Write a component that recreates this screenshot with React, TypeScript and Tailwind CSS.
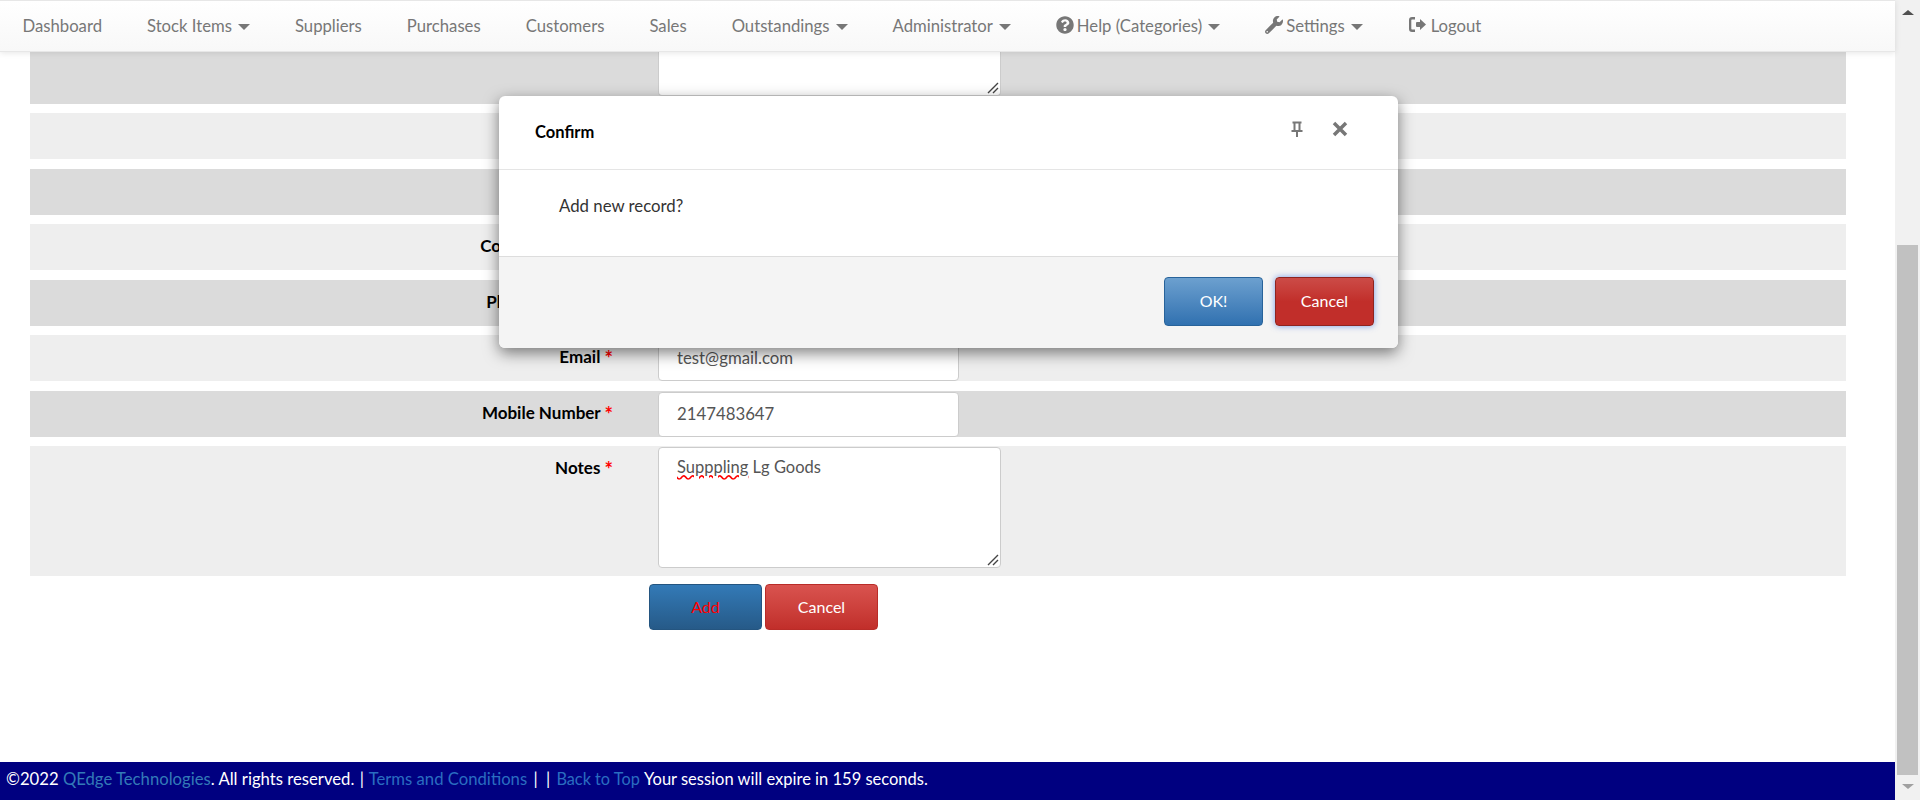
import { FaQuestionCircle, FaWrench } from 'react-icons/fa'

const font = "[font-family:Lato,'Liberation_Sans',sans-serif]"

function Caret() {
  return <span className="ml-[6px] inline-block border-x-[6px] border-t-[6px] border-x-transparent border-t-[#777] align-middle" />
}

function ResizeGrip() {
  return (
    <svg className="absolute bottom-[1px] right-[1px]" width="12" height="12" viewBox="0 0 12 12">
      <path d="M1 11 L11 1 M6 11 L11 6" stroke="#444" strokeWidth="1.4" fill="none" />
    </svg>
  )
}

function LogoutIcon() {
  return (
    <svg width="20" height="18" viewBox="0 0 20 18" fill="#777">
      <path d="M7 1h-3a3 3 0 0 0-3 3v9a3 3 0 0 0 3 3h3v-2.5h-3a.7.7 0 0 1-.7-.7v-8.600a.7.7 0 0 1 .7-.7h3z" />
      <path d="M9 6h3v-3l6 5.500-6 5.500v-3h-3a1 1 0 0 1-1-1v-3a1 1 0 0 1 1-1z" />
    </svg>
  )
}

function NavItem({ label, caret, icon }: { label: string; caret?: boolean; icon?: React.ReactNode }) {
  return (
    <a className="flex items-center px-[22.5px] pt-[2px] text-[16.7px] text-[#777] whitespace-nowrap">
      {icon && <span className="mr-[3px] flex items-center -translate-y-[2px]">{icon}</span>}
      {label}
      {caret && <Caret />}
    </a>
  )
}

function Label({ text }: { text: string }) {
  return (
    <div className="w-[598px] shrink-0 pt-[9px] pr-[15px] text-right text-[17px] font-bold text-black">
      {text} <span className="align-[-3px] text-[20px] leading-[20px] text-[#f00]">*</span>
    </div>
  )
}

function FieldRow({ label, value, dark }: { label: string; value: string; dark?: boolean }) {
  return (
    <div className={`flex h-[46px] shrink-0 ${dark ? 'bg-[#dbdbdb]' : 'bg-[#eeeeee]'}`}>
      <Label text={label} />
      <input
        readOnly
        value={value}
        className="ml-[30px] mt-[1px] h-[45px] w-[301px] rounded-[4px] border border-[#ccc] bg-white px-[18px] pb-[2px] text-[16.8px] text-[#555] outline-none"
      />
    </div>
  )
}

export default function App() {
  return (
    <div className={`flex h-[800px] w-[1920px] overflow-hidden bg-white ${font}`}>
      <div className="relative flex w-[1895px] flex-col">
        <nav className="relative z-10 flex h-[52px] shrink-0 border-y border-[#e7e7e7] bg-gradient-to-b from-white to-[#f8f8f8] shadow-[0_1px_6px_rgba(0,0,0,0.1)]">
          <NavItem label="Dashboard" />
          <NavItem label="Stock Items" caret />
          <NavItem label="Suppliers" />
          <NavItem label="Purchases" />
          <NavItem label="Customers" />
          <NavItem label="Sales" />
          <NavItem label="Outstandings" caret />
          <NavItem label="Administrator" caret />
          <NavItem label="Help (Categories)" caret icon={<FaQuestionCircle size={18} />} />
          <NavItem label="Settings" caret icon={<FaWrench size={18} />} />
          <NavItem label="Logout" icon={<LogoutIcon />} />
        </nav>

        <main className="flex flex-1 flex-col gap-[9.5px] overflow-hidden pl-[30px] pr-[49px]">
          <div className="flex h-[51.5px] shrink-0 bg-[#dbdbdb]">
            <div className="relative ml-[628px] h-[44px] w-[343px] rounded-b-[4px] border-x border-b border-[#ccc] bg-white">
              <ResizeGrip />
            </div>
          </div>
          <FieldRow label="Name" value="" />
          <FieldRow label="Address" value="" dark />
          <FieldRow label="Company Name" value="" />
          <FieldRow label="Phone Number" value="" dark />
          <FieldRow label="Email" value="test@gmail.com" />
          <FieldRow label="Mobile Number" value="2147483647" dark />
          <div className="flex h-[130px] shrink-0 bg-[#eeeeee]">
            <Label text="Notes" />
            <div className="relative ml-[30px] mt-[1px] h-[121px] w-[343px] rounded-[4px] border border-[#ccc] bg-white px-[18px] py-[7px] text-[16.5px] text-[#555]">
              <span className="underline decoration-[#f00] decoration-wavy">Supppling</span> Lg Goods
              <ResizeGrip />
            </div>
          </div>
          <div className="-mt-[1.5px] flex gap-[3px] pl-[619px]">
            <button className="h-[46px] w-[113px] rounded-[4px] border border-[#245580] bg-gradient-to-b from-[#337ab7] to-[#265a88] text-[16px] text-[#f00]">Add</button>
            <button className="h-[46px] w-[113px] rounded-[4px] border border-[#b92c28] bg-gradient-to-b from-[#d9534f] to-[#c12e2a] text-[16px] text-white">Cancel</button>
          </div>
        </main>

        <footer className="flex h-[38px] shrink-0 items-center bg-[#000080] px-[6px] pb-[2px] text-[16.7px] text-white">
          <p className="whitespace-pre">
            ©2022 <a className="text-[#337ab7]">QEdge Technologies</a>. All rights reserved. <span className="mx-[1px]">|</span> <a className="text-[#2a6dc0]">Terms and Conditions</a> <span className="mx-[2px]">|</span> <span className="mx-[2px]">|</span> <a className="text-[16.3px] text-[#2a6dc0]">Back to Top</a> <span className="text-[16.5px]">Your session will expire in 159 seconds.</span>
          </p>
        </footer>

        <div className="absolute left-[499px] top-[96px] z-20 flex h-[252px] w-[899px] flex-col rounded-[6px] bg-white shadow-[0_5px_15px_rgba(0,0,0,0.5)]">
          <div className="flex h-[74px] items-center justify-between border-b border-[#e5e5e5] pl-[36px] pr-[50px]">
            <span className="text-[16.5px] font-bold text-black">Confirm</span>
            <div className="flex items-center gap-[28px] pb-[8px]">
              <svg width="14" height="16" viewBox="0 0 14 16" fill="none" stroke="#777" strokeWidth="2">
                <path d="M2.500 1.500h9M4.500 1.500v7.500M9.500 1.500v7.500M1.500 10h11M7 10v6" />
              </svg>
              <svg width="16" height="16" viewBox="0 0 16 16" stroke="#777" strokeWidth="3.5" fill="none">
                <path d="M2 2l12 12M14 2L2 14" />
              </svg>
            </div>
          </div>
          <div className="h-[86px] pl-[60px] pt-[23px] text-[16.8px] text-[#333]">Add new record?</div>
          <div className="flex flex-1 items-center justify-end gap-[12px] rounded-b-[6px] border-t border-[#ddd] bg-[#f4f4f4] pr-[24px] pb-[3px]">
            <button className="h-[49px] w-[99px] rounded-[4px] border border-[#28639a] bg-gradient-to-b from-[#6ca0cf] to-[#3071b0] text-[16px] text-white">OK!</button>
            <button className="h-[49px] w-[99px] rounded-[4px] border border-[#8e2420] bg-gradient-to-b from-[#cc4b47] via-[#c12e2a] to-[#c12e2a] text-[16px] text-white shadow-[0_0_6px_rgba(70,120,230,0.7)]">Cancel</button>
          </div>
        </div>
      </div>

      <aside className="flex w-[25px] shrink-0 flex-col items-center bg-[#f1f1f1]">
        <div className="mt-[10px] h-0 w-0 border-x-[6px] border-b-[5px] border-x-transparent border-b-[#505050]" />
        <div className="mt-[230px] h-[530px] w-[21px] bg-[#c1c1c1]" />
        <div className="mt-[9px] h-0 w-0 border-x-[6px] border-t-[5px] border-x-transparent border-t-[#a0a0a0]" />
      </aside>
    </div>
  )
}
